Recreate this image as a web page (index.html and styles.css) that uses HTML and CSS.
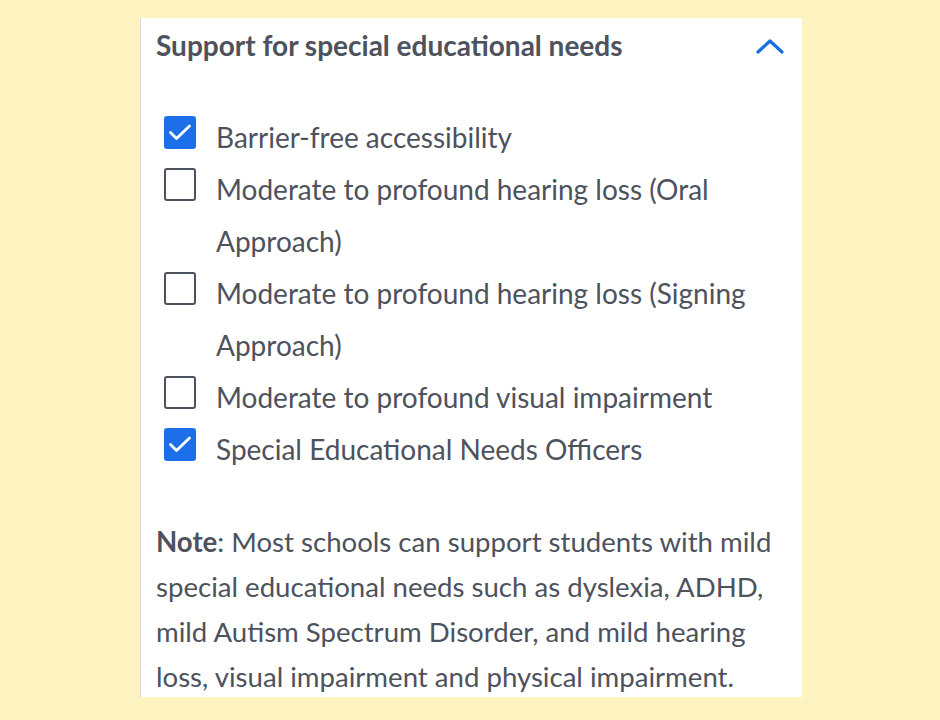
FILE: index.html
```html
<!DOCTYPE html>
<html>
<head>
<meta charset="utf-8">
<link rel="stylesheet" href="styles.css">
</head>
<body>
<div class="panel">
  <div class="header">
    <h2 class="title">Support for special educational needs</h2>
    <svg class="chevron" width="28" height="16" viewBox="0 0 28 16"><path d="M2 14 L14 3 L26 14" fill="none" stroke="#1a6fe0" stroke-width="3.2" stroke-linecap="round" stroke-linejoin="round"/></svg>
  </div>
  <ul class="options">
    <li class="option"><span class="box checked"><svg width="32" height="32" viewBox="0 0 32 32"><path d="M6.5 16.5 L12.5 22.5 L25.5 10" fill="none" stroke="#fff" stroke-width="2.8" stroke-linecap="round" stroke-linejoin="round"/></svg></span><span class="label">Barrier-free accessibility</span></li>
    <li class="option"><span class="box"></span><span class="label">Moderate to profound hearing loss (Oral Approach)</span></li>
    <li class="option"><span class="box"></span><span class="label">Moderate to profound hearing loss (Signing Approach)</span></li>
    <li class="option"><span class="box"></span><span class="label">Moderate to profound visual impairment</span></li>
    <li class="option"><span class="box checked"><svg width="32" height="32" viewBox="0 0 32 32"><path d="M6.5 16.5 L12.5 22.5 L25.5 10" fill="none" stroke="#fff" stroke-width="2.8" stroke-linecap="round" stroke-linejoin="round"/></svg></span><span class="label">Special Educational Needs Officers</span></li>
  </ul>
  <p class="note"><strong>Note</strong>: Most schools can support students with mild special educational needs such as dyslexia, ADHD, mild Autism Spectrum Disorder, and mild hearing loss, visual impairment and physical impairment.</p>
</div>
</body>
</html>
```
FILE: styles.css
```css
html, body {
  margin: 0;
  padding: 0;
  background: #fdf3c0;
  height: 720px;
  overflow: hidden;
}
body {
  padding-top: 18px;
  font-family: Lato, "Open Sans", sans-serif;
  color: #4d525d;
}
.panel {
  margin-left: 140px;
  width: 662px;
  height: 679px;
  background: #fff;
  border-left: 1px solid #d9d9d9;
  box-sizing: border-box;
  padding: 0 16px 0 15px;
  overflow: hidden;
}
.header {
  display: flex;
  align-items: center;
  justify-content: space-between;
  height: 54px;
}
.title {
  margin: 0;
  font-size: 28px;
  font-weight: 700;
  color: #4d525d;
}
.chevron {
  margin-right: 2px;
  margin-top: 2px;
}
.options {
  list-style: none;
  margin: 0;
  padding: 39px 0 0 8px;
}
.option {
  display: flex;
  align-items: flex-start;
  font-size: 28px;
  line-height: 52px;
}
.box {
  flex: none;
  width: 32px;
  height: 33px;
  box-sizing: border-box;
  border: 2.5px solid #4d525d;
  border-radius: 3px;
  margin-top: 5px;
  margin-right: 20px;
  position: relative;
}
.box svg {
  display: block;
}
.box.checked {
  background: #1c6fe8;
  border: none;
}
.note {
  margin: 44px 0 0 0;
  font-size: 27.6px;
  line-height: 45px;
}
.note strong {
  font-weight: 700;
}
```
